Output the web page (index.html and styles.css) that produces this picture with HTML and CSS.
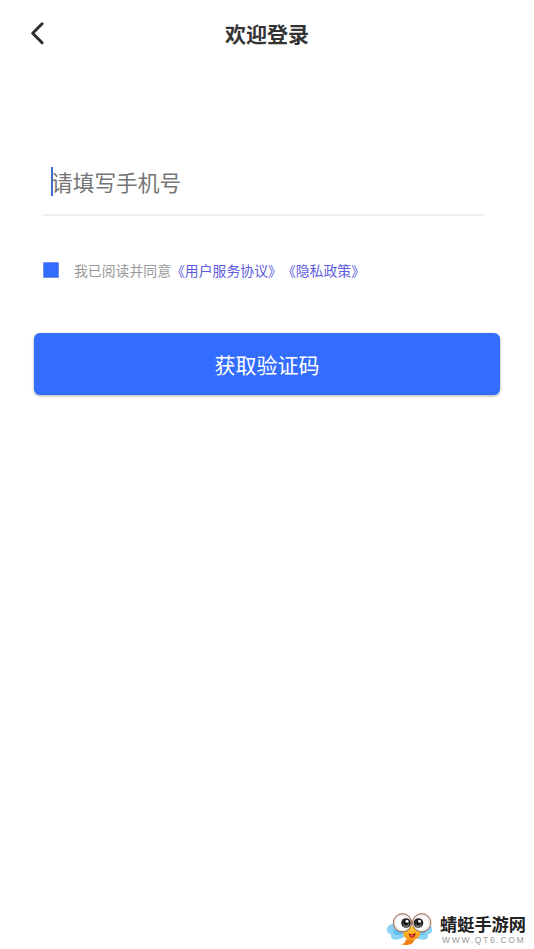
FILE: index.html
```html
<!DOCTYPE html>
<html lang="zh-CN">
<head>
<meta charset="utf-8">
<title>欢迎登录</title>
<link rel="stylesheet" href="styles.css">
</head>
<body>
<div class="page">
  <header class="header">
    <svg class="back" width="20" height="26" viewBox="0 0 20 26"><path d="M14.1 3.8 4.7 13.3l9.4 9.500"/></svg>
    <h1 class="title">欢迎登录</h1>
  </header>
  <main class="form">
    <div class="field"><span class="caret"></span><span class="placeholder">请填写手机号</span></div>
    <div class="agreement">
      <span class="checkbox"></span>
      <p class="terms">我已阅读并同意<a>《用户服务协议》</a><a>《隐私政策》</a></p>
    </div>
    <button class="submit">获取验证码</button>
  </main>
  <footer class="brand">
    <svg class="mascot" width="46" height="34" viewBox="0 0 46 34">
      <defs>
        <radialGradient id="eye"><stop offset=".65" stop-color="#fff"/><stop offset="1" stop-color="#ddd5cf"/></radialGradient>
        <linearGradient id="body" x2="0" y2="1"><stop stop-color="#ffcf35"/><stop offset="1" stop-color="#f57d0b"/></linearGradient>
      </defs>
      <path d="M10 12C4 11 0 15 1 19c.5 2 2 3 4 3-1 4 2 6.500 6 5.500 5 0 9-3.500 11-7.500zM38 12c6-1 9 3 8 7 0 2-2 3-4 3 1 4-2 6.500-6 5.500-5 0-9-3.500-11-7.500z" fill="#8cd3f8"/>
      <path d="M7 18c4-1 9 0 12 3-4 2-8 3-11 1M40 18c-4-1-9 0-12 3 4 2 8 3 11 1" fill="#62bdf0"/>
      <path d="M17 18c2-5 14-5 18 1-1 5-3 8-7 9 0 4-6 6-13 4.500 4-1 5-3 4-4l3-1c-4-2-5-4-5-9.500z" fill="url(#body)"/>
      <path d="M20 27.500c3 2 5 2 8 1M19 30c3 1 5 1 7 0" fill="none" stroke="#ee7614"/>
      <path d="M22.500 21.500c3 1 5 1 7-1 0 3-1 5-3 5-2 1-3-1-4-4z" fill="#a51e16"/>
      <path d="M24.500 24c1-2 3-1 3 0-1 1-2 1-3 0z" fill="#ff6655"/>
      <circle cx="16.500" cy="10.800" r="9.200" fill="url(#eye)" stroke="#a1664b"/>
      <circle cx="35.700" cy="10.800" r="9.200" fill="url(#eye)" stroke="#a1664b"/>
      <circle cx="20" cy="11" r="4.800" fill="#222"/><circle cx="32.500" cy="11" r="4.800" fill="#222"/>
      <circle cx="20" cy="12.500" r="2.900" fill="#77706c"/><circle cx="32.500" cy="12.500" r="2.900" fill="#77706c"/>
      <circle cx="20" cy="11.200" r="2.300" fill="#111"/><circle cx="32.500" cy="11.200" r="2.300" fill="#111"/>
      <circle cx="21" cy="9.200" r="1.500" fill="#fff"/><circle cx="33.500" cy="9.200" r="1.500" fill="#fff"/>
    </svg>
    <div class="brand-text">
      <span class="brand-name">蜻蜓手游网</span>
      <span class="brand-url">WWW.QT6.COM</span>
    </div>
  </footer>
</div>
</body>
</html>
```
FILE: styles.css
```css
* { box-sizing: border-box; }
body {
  margin: 0;
  background: #fff;
  font-family: "Noto Sans CJK SC", sans-serif;
}
.page {
  display: flex;
  flex-direction: column;
  height: 949px;
  overflow: hidden;
}
.header {
  display: grid;
  grid-template-columns: 48px 1fr 48px;
  align-items: center;
  height: 66px;
}
.back {
  margin-left: 28px;
  fill: none;
  stroke: #2e2e2e;
  stroke-width: 3;
  stroke-linecap: round;
  stroke-linejoin: round;
}
.title {
  margin: 0;
  color: #333;
  font-size: 21px;
  line-height: 30px;
  font-weight: 700;
  text-align: center;
}
.form { padding: 96px 34px 0; }
.field {
  display: flex;
  align-items: center;
  height: 54px;
  margin: 0 16px 0 9px;
  padding: 0 8px 13px;
  border-bottom: 2px solid #eee;
}
.caret {
  width: 2px;
  height: 29px;
  margin-right: -2px;
  background: #3c6cd0;
}
.placeholder {
  color: #757575;
  font-size: 21.7px;
  line-height: 29px;
}
.agreement {
  display: flex;
  align-items: center;
  height: 20px;
  margin: 44px 0 53px 9px;
}
.checkbox {
  width: 16px;
  height: 16px;
  margin-right: 15px;
  border: 1px solid #6d94e8;
  border-radius: 1px;
  background: #336dff;
}
.terms {
  margin: 0;
  color: #999;
  font-size: 13.86px;
  line-height: 20px;
  white-space: nowrap;
  text-spacing-trim: space-all;
}
.terms a { color: #5c5ce0; }
.submit {
  display: block;
  width: 100%;
  height: 62px;
  padding: 0;
  border: 0;
  border-radius: 6px;
  background: #336dff;
  box-shadow: 0 1px 3px rgba(0, 0, 0, .35);
  color: #fff;
  font: 21px/62px "Noto Sans CJK SC", sans-serif;
}
.brand {
  display: flex;
  margin: auto 8px 3px auto;
}
.mascot { margin-right: 8px; }
.brand-text {
  display: flex;
  flex-direction: column;
  width: 86px;
  padding-top: 1px;
}
.brand-name {
  color: #222;
  font-size: 17.2px;
  line-height: 21px;
  font-weight: 700;
  white-space: nowrap;
}
.brand-url {
  margin-top: 1px;
  padding-left: 2px;
  color: #999;
  font: 8.5px/10px "Liberation Sans", sans-serif;
  letter-spacing: 1.7px;
  white-space: nowrap;
}
```
